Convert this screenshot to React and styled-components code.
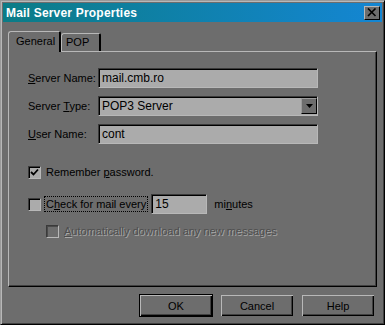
import React from 'react';
import styled, { createGlobalStyle } from 'styled-components';

const GlobalStyle = createGlobalStyle`
  html, body {
    margin: 0;
    padding: 0;
    background: #6d6d6d;
  }
  * {
    box-sizing: border-box;
  }
`;

const Window = styled.div`
  width: 385px;
  height: 325px;
  background: #6d6d6d;
  font-family: 'Liberation Sans', Arial, sans-serif;
  font-size: 11px;
  color: #000;
  border-top: 1px solid #9a9a9a;
  border-left: 1px solid #9a9a9a;
  border-right: 1px solid #000;
  border-bottom: 1px solid #000;
  box-shadow: inset 1px 1px 0 #b8b8b8, inset -1px -1px 0 #404040;
  padding: 2px;
  display: flex;
  flex-direction: column;
`;

const TitleBar = styled.div`
  height: 19px;
  display: flex;
  align-items: center;
  justify-content: space-between;
  padding: 0 2px 0 3px;
  background: linear-gradient(to right, #0b7c86, #1486d3);
`;

const Title = styled.span`
  color: #fff;
  font-weight: bold;
  font-size: 12px;
  letter-spacing: 0.2px;
`;

const CloseButton = styled.div`
  width: 16px;
  height: 14px;
  background: #6d6d6d;
  border-top: 1px solid #b8b8b8;
  border-left: 1px solid #b8b8b8;
  border-right: 1px solid #000;
  border-bottom: 1px solid #000;
  display: flex;
  align-items: center;
  justify-content: center;
`;

const Body = styled.div`
  padding: 8px 5px 0 5px;
  display: flex;
  flex-direction: column;
`;

const Tabs = styled.div`
  display: flex;
  align-items: flex-end;
  height: 21px;
  position: relative;
  z-index: 1;
`;

const Tab = styled.div`
  height: ${(p) => (p.$active ? '21px' : '18px')};
  width: ${(p) => (p.$active ? '53px' : '40px')};
  padding: ${(p) => (p.$active ? '3px 0 0 7px' : '2px 0 0 4px')};
  margin-bottom: ${(p) => (p.$active ? '-1px' : '0')};
  background: #6d6d6d;
  border-top: 1px solid #b8b8b8;
  border-left: 1px solid #b8b8b8;
  border-right: 2px solid #000;
  border-top-left-radius: 3px;
  border-top-right-radius: 2px;
  font-size: 11px;
`;

const Panel = styled.div`
  height: 236px;
  border-top: 1px solid #b8b8b8;
  border-left: 1px solid #b8b8b8;
  border-right: 1px solid #000;
  border-bottom: 1px solid #000;
  box-shadow: inset -1px -1px 0 #404040;
  padding: 16px 0 0 19px;
  display: flex;
  flex-direction: column;
`;

const FieldRow = styled.div`
  display: flex;
  align-items: center;
  height: 20px;
  margin-bottom: 8px;
`;

const Label = styled.span`
  width: 70px;
  white-space: nowrap;
`;

const Sunken = styled.div`
  width: ${(p) => p.$width}px;
  height: 20px;
  margin-left: ${(p) => p.$gap || 0}px;
  background: #ababab;
  border-top: 1px solid #3a3a3a;
  border-left: 1px solid #3a3a3a;
  border-right: 1px solid #b8b8b8;
  border-bottom: 1px solid #b8b8b8;
  box-shadow: inset 1px 1px 0 #000;
  padding: 2px 0 0 3px;
  font-size: 12px;
  display: flex;
  align-items: flex-start;
  justify-content: space-between;
`;

const DropButton = styled.div`
  width: 16px;
  height: 16px;
  margin-top: -1px;
  background: #6d6d6d;
  border-top: 1px solid #9a9a9a;
  border-left: 1px solid #9a9a9a;
  border-right: 1px solid #000;
  border-bottom: 1px solid #000;
  display: flex;
  align-items: center;
  justify-content: center;
`;

const CheckRow = styled.div`
  display: flex;
  align-items: center;
  height: 20px;
  margin-left: ${(p) => p.$indent || 0}px;
  margin-top: ${(p) => p.$top || 0}px;
`;

const Box = styled.div`
  width: 13px;
  height: 13px;
  flex: none;
  background: ${(p) => (p.$disabled ? '#6d6d6d' : '#ababab')};
  border-top: 1px solid #3a3a3a;
  border-left: 1px solid #3a3a3a;
  border-right: 1px solid #b8b8b8;
  border-bottom: 1px solid #b8b8b8;
  box-shadow: inset 1px 1px 0 ${(p) => (p.$disabled ? '#4a4a4a' : '#000')};
  display: flex;
  align-items: center;
  justify-content: center;
  margin-right: 5px;
`;

const CheckText = styled.span`
  white-space: nowrap;
  font-size: 11px;
  padding: 1px 1px;
  border: 1px dotted ${(p) => (p.$focus ? '#000' : 'transparent')};
  color: ${(p) => (p.$disabled ? '#4e4e4e' : '#000')};
  text-shadow: ${(p) => (p.$disabled ? '1px 1px 0 #a8a8a8' : 'none')};
  margin-left: -2px;
`;

const Minutes = styled.span`
  margin-left: 7px;
  font-size: 11px;
`;

const ButtonRow = styled.div`
  display: flex;
  justify-content: flex-end;
  gap: 7px;
  padding: 7px 2px 0 0;
`;

const Button = styled.div`
  width: 74px;
  height: 23px;
  background: #6d6d6d;
  border: 1px solid ${(p) => (p.$default ? '#000' : 'transparent')};
  box-shadow: inset 1px 1px 0 #b8b8b8, inset -1px -1px 0 #000, inset -2px -2px 0 #404040;
  display: flex;
  align-items: center;
  justify-content: center;
  font-size: 11px;
  padding-top: 1px;
`;

const U = styled.span`
  text-decoration: underline;
  text-underline-offset: 1px;
`;

export default function App() {
  return (
    <>
      <GlobalStyle />
      <Window>
        <TitleBar>
          <Title>Mail Server Properties</Title>
          <CloseButton>
            <svg width="10" height="9" viewBox="0 0 10 9">
              <path d="M1 0.5 L8.5 8 M8.5 0.5 L1 8" stroke="#000" strokeWidth="1.6" />
            </svg>
          </CloseButton>
        </TitleBar>
        <Body>
          <Tabs>
            <Tab $active>General</Tab>
            <Tab>POP</Tab>
          </Tabs>
          <Panel>
            <FieldRow>
              <Label>
                <U>S</U>erver Name:
              </Label>
              <Sunken $width={220}>mail.cmb.ro</Sunken>
            </FieldRow>
            <FieldRow>
              <Label>
                Server <U>T</U>ype:
              </Label>
              <Sunken $width={220}>
                POP3 Server
                <DropButton>
                  <svg width="7" height="4" viewBox="0 0 7 4">
                    <path d="M0 0 H7 L3.5 4 Z" fill="#000" />
                  </svg>
                </DropButton>
              </Sunken>
            </FieldRow>
            <FieldRow>
              <Label>
                <U>U</U>ser Name:
              </Label>
              <Sunken $width={220}>cont</Sunken>
            </FieldRow>
            <CheckRow $top={10}>
              <Box>
                <svg width="9" height="9" viewBox="0 0 9 9">
                  <path d="M1 4 L3.5 6.5 L8 1.5" stroke="#000" strokeWidth="1.8" fill="none" />
                </svg>
              </Box>
              <CheckText>
                Remember <U>p</U>assword.
              </CheckText>
            </CheckRow>
            <CheckRow $top={12}>
              <Box />
              <CheckText $focus>
                C<U>h</U>eck for mail every
              </CheckText>
              <Sunken $width={56} $gap={3}>
                15
              </Sunken>
              <Minutes>
                mi<U>n</U>utes
              </Minutes>
            </CheckRow>
            <CheckRow $indent={18} $top={7}>
              <Box $disabled />
              <CheckText $disabled>
                <U>A</U>utomatically download any new messages
              </CheckText>
            </CheckRow>
          </Panel>
          <ButtonRow>
            <Button $default>OK</Button>
            <Button>Cancel</Button>
            <Button>Help</Button>
          </ButtonRow>
        </Body>
      </Window>
    </>
  );
}
